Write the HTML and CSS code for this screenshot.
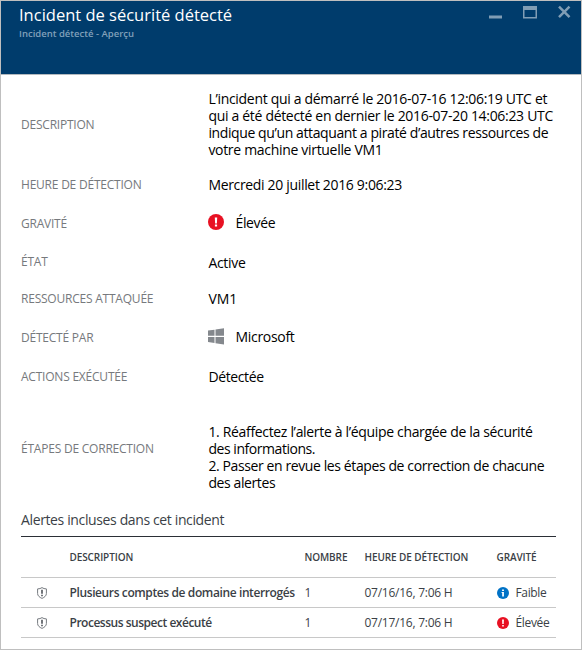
FILE: index.html
```html
<!DOCTYPE html>
<html lang="fr">
<head>
<meta charset="utf-8">
<title>Incident de sécurité détecté</title>
<link rel="stylesheet" href="styles.css">
</head>
<body>
<main class="blade">
  <header class="head">
    <div class="titles">
      <h1>Incident de sécurité détecté</h1>
      <p>Incident détecté - Aperçu</p>
    </div>
    <svg class="controls" width="84" height="16" viewBox="0 0 84 16">
      <path d="M0 12h13" stroke="#809db5" stroke-width="3"/>
      <path d="M34 1h14v12.500H34zM35.500 5v7h11V5z" fill="#809db5" fill-rule="evenodd"/>
      <path d="M70 1.700l10.500 10.500M80.500 1.700L70 12.200" stroke="#809db5" stroke-width="2.500"/>
    </svg>
  </header>
  <dl class="props">
    <div class="row r1"><dt>DESCRIPTION</dt><dd class="lines"><span class="l1">L’incident qui a démarré le 2016-07-16 12:06:19 UTC et</span><span class="l1">qui a été détecté en dernier le 2016-07-20 14:06:23 UTC</span><span class="l3">indique qu’un attaquant a piraté d’autres ressources de</span><span class="l1">votre machine virtuelle VM1</span></dd></div>
    <div class="row r2"><dt>HEURE DE DÉTECTION</dt><dd class="s1">Mercredi 20 juillet 2016 9:06:23</dd></div>
    <div class="row r3"><dt>GRAVITÉ</dt><dd class="with-icon"><svg width="16" height="16" viewBox="0 0 16 16"><circle cx="8" cy="8" r="8" fill="#e81123"/><path d="M6.800 3.500h2.400l-.3 6H7.100zM6.900 10.500h2.200v2H6.900z" fill="#fff"/></svg><span>Élevée</span></dd></div>
    <div class="row r4"><dt>ÉTAT</dt><dd class="l1">Active</dd></div>
    <div class="row r5"><dt>RESSOURCES ATTAQUÉE</dt><dd class="vm">VM1</dd></div>
    <div class="row r6"><dt>DÉTECTÉ PAR</dt><dd class="with-icon"><svg width="16" height="17" viewBox="0 0 16 17"><path d="M0 2.600l6.500-.9v6.100H0zM7.500 1.500L16 .3v7.500H7.500zM0 8.900h6.500V15L0 14.100zM7.500 8.900H16v7.500l-8.500-1.200z" fill="#84888d"/></svg><span class="l1">Microsoft</span></dd></div>
    <div class="row r7"><dt>ACTIONS EXÉCUTÉE</dt><dd>Détectée</dd></div>
    <div class="row r8"><dt>ÉTAPES DE CORRECTION</dt><dd class="lines"><span class="s1">1. Réaffectez l’alerte à l’équipe chargée de la sécurité</span><span class="s2">des informations.</span><span class="l3">2. Passer en revue les étapes de correction de chacune</span><span class="l3">des alertes</span></dd></div>
  </dl>
  <section class="alerts">
    <h2>Alertes incluses dans cet incident</h2>
    <div class="tr th"><span></span><span>DESCRIPTION</span><span>NOMBRE</span><span>HEURE DE DÉTECTION</span><span>GRAVITÉ</span></div>
    <div class="tr">
      <svg class="shield" width="10" height="12" viewBox="0 0 10 12"><path d="M5 .6C3.800 1.500 2.300 1.900.6 1.900v4.600C.6 8.800 2.500 10.300 5 11.400c2.500-1.100 4.400-2.600 4.400-4.900V1.900C7.700 1.900 6.200 1.500 5 .6z" fill="none" stroke="#777b80"/><path d="M5 2.800v4M5 7.800v1.400" stroke="#50545a" stroke-width="1.600"/></svg>
      <b class="a1">Plusieurs comptes de domaine interrogés</b><span>1</span><span>07/16/16, 7:06 H</span>
      <span class="sev"><svg width="12" height="12" viewBox="0 0 12 12"><circle cx="6" cy="6" r="6" fill="#0072c6"/><path d="M5.100 2.500h1.800v1.600H5.100zM4.600 5h2.300v4.500H5.200V6h-.6z" fill="#fff"/></svg>Faible</span>
    </div>
    <div class="tr">
      <svg class="shield" width="10" height="12" viewBox="0 0 10 12"><path d="M5 .6C3.800 1.500 2.300 1.900.6 1.900v4.600C.6 8.800 2.500 10.300 5 11.400c2.500-1.100 4.400-2.600 4.400-4.900V1.900C7.700 1.900 6.200 1.500 5 .6z" fill="none" stroke="#777b80"/><path d="M5 2.800v4M5 7.800v1.400" stroke="#50545a" stroke-width="1.600"/></svg>
      <b class="a2">Processus suspect exécuté</b><span>1</span><span>07/17/16, 7:06 H</span>
      <span class="sev"><svg width="12" height="12" viewBox="0 0 12 12"><circle cx="6" cy="6" r="6" fill="#e81123"/><path d="M5.100 2.500h1.800l-.2 4.500H5.300zM5.200 7.900h1.600v1.600H5.200z" fill="#fff"/></svg>Élevée</span>
    </div>
  </section>
</main>
</body>
</html>
```
FILE: styles.css
```css
* { box-sizing: border-box; margin: 0; padding: 0; }
body { background: #fff; font-family: "Open Sans", "Noto Sans", sans-serif; color: #000; }
.blade { width: 582px; height: 650px; border: 1px solid #bfbfbf; overflow: hidden; }
.head { height: 74px; background: #003c6c; border-bottom: 1px solid #b3b9be; display: flex; justify-content: space-between; padding: 4px 8px 0 18px; }
.head h1 { font-size: 16.500px; line-height: 20px; padding-bottom: 1px; font-weight: 400; color: #fff; white-space: nowrap; }
.head p { font-size: 9.500px; line-height: 16px; font-weight: 600; color: #80a0ba; white-space: nowrap; }
.controls { display: block; }
.props { padding: 9px 0 0 20px; height: 427px; }
.row { display: grid; grid-template-columns: 187px 1fr; align-items: center; white-space: nowrap; }
.r1 { height: 81px; }
.r2 { height: 39px; }
.r3 { height: 39px; }
.r4 { height: 38px; }
.r5 { height: 36px; }
.r6 { height: 41px; }
.r7 { height: 38px; }
.r8 { height: 106px; }
dt { font-size: 12px; line-height: 16px; color: #76797d; letter-spacing: -0.220px; }
dd { font-size: 14px; line-height: 17px; letter-spacing: -0.380px; padding-left: 0.400px; }
.lines span { display: block; }
.l1 { letter-spacing: -0.310px; }
.l3 { letter-spacing: -0.395px; }
.s1 { letter-spacing: -0.330px; }
.s2 { letter-spacing: -0.450px; }
.vm { letter-spacing: -0.100px; }
.r1 dd { padding-bottom: 2px; }
.r3 dd { padding-bottom: 3px; }
.r5 dd, .r6 dd, .r7 dd { padding-bottom: 2px; }
.r8 dd { padding-top: 15px; }
.with-icon { display: flex; align-items: center; gap: 11.500px; padding-left: 0; }
.alerts { width: 535px; margin-left: 20px; color: #3b3f46; }
.alerts h2 { height: 35px; font-size: 14px; line-height: 36px; font-weight: 400; letter-spacing: -0.370px; border-bottom: 1px solid #2b2f36; white-space: nowrap; }
.tr { display: grid; grid-template-columns: 48.500px 235px 60px 132px 1fr; align-items: center; height: 30px; border-bottom: 1px solid #c8c8c8; font-size: 12px; white-space: nowrap; letter-spacing: -0.250px; }
.th { height: 41px; font-size: 10px; font-weight: 600; letter-spacing: -0.100px; }
.tr b { font-weight: 600; }
.a1 { letter-spacing: -0.390px; }
.a2 { letter-spacing: -0.480px; }
.shield { margin-left: 16px; }
.sev { display: flex; align-items: center; gap: 7px; letter-spacing: -0.350px; }
```
